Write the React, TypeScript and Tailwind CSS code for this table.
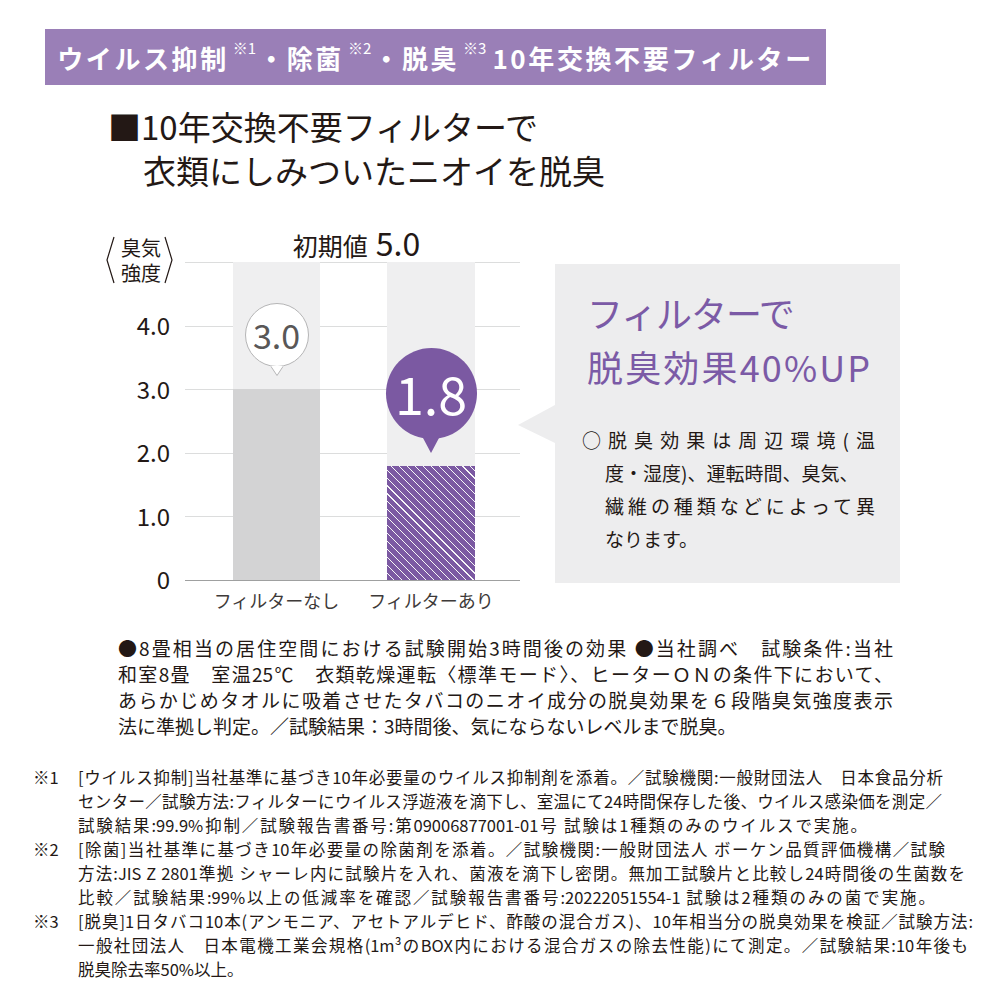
import React from 'react';

const GRID_STEP = 63.6;

const NOTE_LINES = [
  '●8畳相当の居住空間における試験開始3時間後の効果 ●当社調べ　試験条件:当社',
  '和室8畳　室温25℃　衣類乾燥運転〈標準モード〉、ヒーターＯＮの条件下において、',
  'あらかじめタオルに吸着させたタバコのニオイ成分の脱臭効果を６段階臭気強度表示',
];

const FOOTNOTES: Array<{ mark: string; lines: Array<{ text: string; w?: number }> }> = [
  {
    mark: '※1',
    lines: [
      { text: '[ウイルス抑制]当社基準に基づき10年必要量のウイルス抑制剤を添着。／試験機関:一般財団法人　日本食品分析', w: 865 },
      { text: 'センター／試験方法:フィルターにウイルス浮遊液を滴下し、室温にて24時間保存した後、ウイルス感染価を測定／', w: 864 },
      { text: '試験結果:99.9%抑制／試験報告書番号:第09006877001-01号 試験は1種類のみのウイルスで実施。', w: 789 },
    ],
  },
  {
    mark: '※2',
    lines: [
      { text: '[除菌]当社基準に基づき10年必要量の除菌剤を添着。／試験機関:一般財団法人 ボーケン品質評価機構／試験', w: 867 },
      { text: '方法:JIS Z 2801準拠 シャーレ内に試験片を入れ、菌液を滴下し密閉。無加工試験片と比較し24時間後の生菌数を', w: 887 },
      { text: '比較／試験結果:99%以上の低減率を確認／試験報告書番号:20222051554-1 試験は2種類のみの菌で実施。', w: 857 },
    ],
  },
  {
    mark: '※3',
    lines: [
      { text: '[脱臭]1日タバコ10本(アンモニア、アセトアルデヒド、酢酸の混合ガス)、10年相当分の脱臭効果を検証／試験方法:', w: 895 },
      { text: '一般社団法人　日本電機工業会規格(1m³のBOX内における混合ガスの除去性能)にて測定。／試験結果:10年後も', w: 890 },
      { text: '脱臭除去率50%以上。' },
    ],
  },
];

function Sup({ children }: { children: React.ReactNode }) {
  return (
    <span className="relative -top-[9px] ml-[4px] mr-[2px] text-[15px] font-normal tracking-normal">{children}</span>
  );
}

function Bracket({ side }: { side: 'left' | 'right' }) {
  const d = side === 'left' ? 'M9 1 L2 24 L9 47' : 'M1 1 L8 24 L1 47';
  return (
    <svg width="10" height="48" viewBox="0 0 10 48" className="shrink-0">
      <path d={d} fill="none" stroke="#231815" strokeWidth="1.2" />
    </svg>
  );
}

function Chart() {
  return (
    <div className="ml-[105px] flex w-[415px]">
      {/* y axis */}
      <div className="w-[80px] shrink-0">
        <div className="mt-[13px] flex h-[50px] items-center">
          <Bracket side="left" />
          <div className="ml-[6px] mr-[3px] text-[20px] leading-[25px]">
            <div>臭気</div>
            <div>強度</div>
          </div>
          <Bracket side="right" />
        </div>
        <div className="mt-[28px] flex flex-col gap-[39.6px] pr-[15px]">
          {['4.0', '3.0', '2.0', '1.0', '0'].map(v => (
            <div key={v} className="h-[24px] text-right text-[24px] leading-[24px]">{v}</div>
          ))}
        </div>
      </div>

      {/* plot */}
      <div className="w-[335px] shrink-0">
        <div className="flex h-[40px] items-end justify-center pb-[4px] pl-[8px] leading-none">
          <span className="text-[25px]">初期値</span>
          <span className="ml-[8px] text-[32px]">5.0</span>
        </div>
        <div className="relative h-[319px] border-b border-[#9fa0a0]">
          <div className="absolute inset-x-0 top-0 flex flex-col">
            {[0, 1, 2, 3, 4].map(i => (
              <div key={i} className="h-[63.6px] border-t border-[#dcdddd]" />
            ))}
          </div>
          <div className="relative flex h-full items-end gap-[67px] pl-[48px]">
            <div className="flex h-full w-[87px] flex-col items-center justify-end bg-[#efeff0]">
              <div className="flex h-[64px] w-[64px] items-center justify-center rounded-full border border-[#b5b5b6] bg-white text-[34px] leading-none text-[#595757]">
                3.0
              </div>
              <svg width="12" height="10" viewBox="0 0 12 10" className="relative -mt-[1px]">
                <path d="M0 0.5 L6 9.5 L12 0.5" fill="#ffffff" stroke="#b5b5b6" strokeWidth="1" />
                <rect x="0.8" y="0" width="10.4" height="1.2" fill="#ffffff" />
              </svg>
              <div className="mt-[13px] w-full bg-[#d3d3d4]" style={{ height: 3 * GRID_STEP }} />
            </div>
            <div className="flex h-full w-[88px] flex-col items-center justify-end bg-[#efeff0]">
              <div className="flex h-[91px] w-[91px] shrink-0 items-center justify-center rounded-full bg-[#7b59a2] text-[52px] leading-none text-white">
                1.8
              </div>
              <svg width="16" height="15" viewBox="0 0 16 15" className="-mt-[1px]">
                <path d="M0 0 L8 15 L16 0 Z" fill="#7b59a2" />
              </svg>
              <div
                className="mt-[13px] w-full bg-[image:repeating-linear-gradient(45deg,#7b59a2_0px,#7b59a2_4.8px,rgba(255,255,255,0.5)_4.8px,rgba(255,255,255,0.5)_5.6px)]"
                style={{ height: 1.8 * GRID_STEP }}
              />
            </div>
          </div>
        </div>
        <div className="mt-[7px] flex gap-[67px] pl-[48px] text-[18px] leading-[24px] text-[#3e3a39]">
          <div className="flex w-[87px] justify-center whitespace-nowrap">フィルターなし</div>
          <div className="flex w-[88px] justify-center whitespace-nowrap">フィルターあり</div>
        </div>
      </div>
    </div>
  );
}

function Callout() {
  return (
    <div className="-ml-[2px] mt-[42px] flex items-start">
      <svg width="37" height="38" viewBox="0 0 37 38" className="mt-[141px] shrink-0">
        <path d="M37 0 L0 20 L37 38 Z" fill="#ededee" />
      </svg>
      <div className="h-[319px] w-[345px] bg-[#ededee] pl-[32px] pt-[21px]">
        <div className="text-[36px] leading-[54px] text-[#7b5aa6]">
          <div className="tracking-[-0.03em]">フィルターで</div>
          <div className="tracking-[0.06em]">脱臭効果40%UP</div>
        </div>
        <div className="-ml-[5px] mt-[30px] w-[293px] text-[19px] leading-[33px]">
          <div className="text-justify [text-align-last:justify]">○脱臭効果は周辺環境(温</div>
          <div className="pl-[23px]">
            <div className="whitespace-nowrap">度・湿度)、運転時間、臭気、</div>
            <div className="text-justify [text-align-last:justify]">繊維の種類などによって異</div>
            <div>なります。</div>
          </div>
        </div>
      </div>
    </div>
  );
}

export default function App() {
  return (
    <div className="h-[1000px] w-[1000px] overflow-hidden bg-white font-['Noto_Sans_CJK_JP','Noto_Sans',sans-serif] text-[#231815]">
      <div className="pl-[45px] pt-[29px]">
        <div className="flex h-[56px] w-[781px] items-center justify-center whitespace-nowrap bg-[#9a7fb7] text-[26px] font-bold tracking-[0.1em] text-white">
          ウイルス抑制<Sup>※1</Sup>・除菌<Sup>※2</Sup>・脱臭<Sup>※3</Sup>
          <span className="ml-[4px]">10年交換不要フィルター</span>
        </div>
      </div>

      <div className="mt-[19px] pl-[108px] text-[33px] leading-[44px]">
        <div>■10年交換不要フィルターで</div>
        <div className="pl-[35px]">衣類にしみついたニオイを脱臭</div>
      </div>

      <div className="mt-[30px] flex">
        <Chart />
        <Callout />
      </div>

      <div className="ml-[118px] mt-[23px] w-[775px] text-[19px] leading-[26px]">
        {NOTE_LINES.map(line => (
          <div key={line} className="whitespace-nowrap text-justify [text-align-last:justify]">{line}</div>
        ))}
        <div className="whitespace-nowrap">法に準拠し判定。／試験結果：3時間後、気にならないレベルまで脱臭。</div>
      </div>

      <div className="mt-[26px] pl-[33px] text-[16.5px] leading-[24px]">
        {FOOTNOTES.map(note => (
          <div key={note.mark} className="flex">
            <div className="w-[45px] shrink-0">{note.mark}</div>
            <div>
              {note.lines.map(line => (
                <div
                  key={line.text}
                  className="whitespace-nowrap text-justify [text-align-last:justify]"
                  style={line.w ? { width: line.w } : { textAlignLast: 'auto' }}
                >
                  {line.text}
                </div>
              ))}
            </div>
          </div>
        ))}
      </div>
    </div>
  );
}
